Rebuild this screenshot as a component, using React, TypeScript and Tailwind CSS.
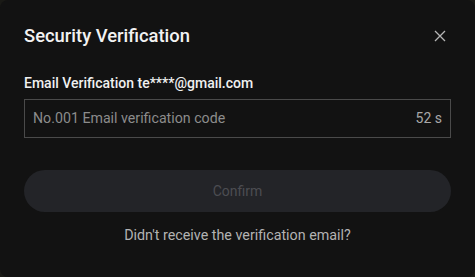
export default function App() {
  return (
    <div className="h-[277px] w-[475px] bg-[#1a1a16] font-['Roboto',sans-serif]">
      <div className="flex h-full w-full flex-col rounded-lg bg-[#121212] px-6">
        <div className="flex items-center justify-between pt-[24px]">
          <h1 className="text-[18.4px] font-medium leading-[24px] text-[#f2f2f2]">Security Verification</h1>
          <button className="mr-[4px] text-[#b5b5b5]">
            <svg width="14" height="14" viewBox="0 0 14 14" fill="none" stroke="currentColor" strokeWidth="1.3">
              <path d="M2 2L12 12M12 2L2 12" />
            </svg>
          </button>
        </div>
        <label className="mt-[25px] text-[14px] font-medium leading-[20px] text-[#f0f0f0]">
          Email Verification te****@gmail.com
        </label>
        <div className="mt-[6px] flex h-[39px] items-center justify-between border border-[#4a4a4a] px-[8px]">
          <span className="text-[14.2px] text-[#8c8c8c]">No.001 Email verification code</span>
          <span className="text-[14px] text-[#a8a8a8]">52 s</span>
        </div>
        <button className="mt-[32px] h-[42px] w-full rounded-full bg-[#232428] text-[14px] text-[#4c4d52]">
          Confirm
        </button>
        <p className="mt-[13px] text-center text-[14.3px] leading-[20px] text-[#b3b3b3]">
          Didn't receive the verification email?
        </p>
      </div>
    </div>
  );
}
